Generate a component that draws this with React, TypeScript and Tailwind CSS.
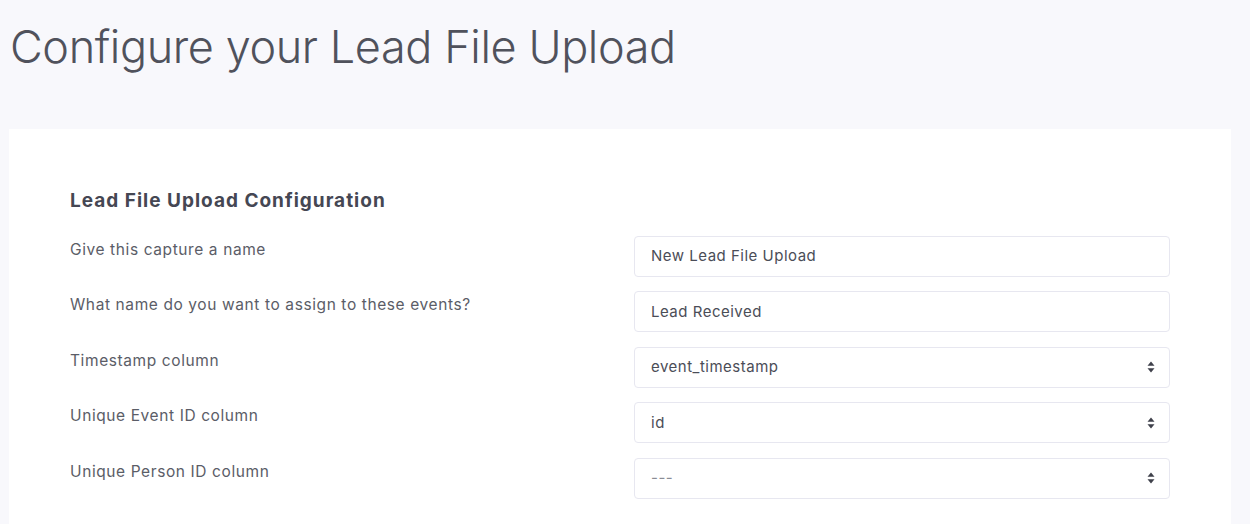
type Field = {
  label: string;
  value: string;
  select?: boolean;
  muted?: boolean;
};

const fields: Field[] = [
  { label: "Give this capture a name", value: "New Lead File Upload" },
  { label: "What name do you want to assign to these events?", value: "Lead Received" },
  { label: "Timestamp column", value: "event_timestamp", select: true },
  { label: "Unique Event ID column", value: "id", select: true },
  { label: "Unique Person ID column", value: "---", select: true, muted: true },
];

function SortArrows() {
  return (
    <svg width="8" height="12" viewBox="0 0 8 12" className="text-[#3f414b]">
      <path d="M4 0.5 L7.5 4.8 H0.5 Z" fill="currentColor" />
      <path d="M4 11.5 L7.5 7.2 H0.5 Z" fill="currentColor" />
    </svg>
  );
}

function FieldRow({ field }: { field: Field }) {
  return (
    <div className="flex items-start h-[55.5px]">
      <div className="w-[564px] pt-[2px] text-[15.5px] tracking-[0.6px] text-[#5b5d67]">{field.label}</div>
      <div className="w-[536px] h-[41px] flex items-center justify-between rounded-[4px] border border-[#e7e7f0] bg-white pl-4 pr-[14px]">
        <span
          className={
            field.muted
              ? "pt-[1px] text-[15px] tracking-[0.5px] text-[#8a8c95]"
              : "pt-[1px] text-[15px] tracking-[0.5px] text-[#4b4d57]"
          }
        >
          {field.value}
        </span>
        {field.select && <SortArrows />}
      </div>
    </div>
  );
}

export default function App() {
  return (
    <div
      className="h-[524px] overflow-hidden bg-[#f8f8fc]"
      style={{ fontFamily: "Inter, 'Noto Sans', sans-serif" }}
    >
      <div className="px-[10px] pt-[24px] h-[129px]">
        <h1 className="text-[45px] font-light leading-none tracking-[-0.4px] text-[#50525c]">
          Configure your Lead File Upload
        </h1>
      </div>
      <div className="mx-[9px] w-[1222px] h-[395px] bg-white pl-[61px] pr-[61px] pt-[58px]">
        <h2 className="text-[19px] font-bold tracking-[1px] text-[#454753] mb-[20px]">
          Lead File Upload Configuration
        </h2>
        <div className="flex flex-col">
          {fields.map((f) => (
            <FieldRow key={f.label} field={f} />
          ))}
        </div>
      </div>
    </div>
  );
}
